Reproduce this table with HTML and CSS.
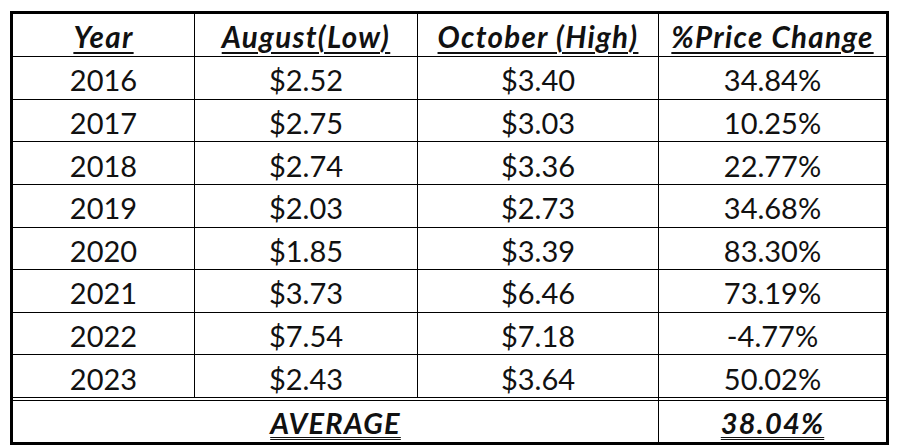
FILE: index.html
```html
<!DOCTYPE html>
<html lang="en">
<head>
<meta charset="utf-8">
<title>Price Change</title>
<link rel="stylesheet" href="styles.css">
</head>
<body>
<div class="sheet">
  <div class="grid">
    <div class="cell head"><span class="u">Year</span></div>
    <div class="cell head"><span class="u">August(Low)</span></div>
    <div class="cell head"><span class="u">October (High)</span></div>
    <div class="cell head"><span class="u">%Price Change</span></div>

    <div class="cell">2016</div><div class="cell">$2.52</div><div class="cell">$3.40</div><div class="cell">34.84%</div>
    <div class="cell">2017</div><div class="cell">$2.75</div><div class="cell">$3.03</div><div class="cell">10.25%</div>
    <div class="cell">2018</div><div class="cell">$2.74</div><div class="cell">$3.36</div><div class="cell">22.77%</div>
    <div class="cell">2019</div><div class="cell">$2.03</div><div class="cell">$2.73</div><div class="cell">34.68%</div>
    <div class="cell">2020</div><div class="cell">$1.85</div><div class="cell">$3.39</div><div class="cell">83.30%</div>
    <div class="cell">2021</div><div class="cell">$3.73</div><div class="cell">$6.46</div><div class="cell">73.19%</div>
    <div class="cell">2022</div><div class="cell">$7.54</div><div class="cell">$7.18</div><div class="cell">-4.77%</div>
    <div class="cell">2023</div><div class="cell">$2.43</div><div class="cell">$3.64</div><div class="cell">50.02%</div>

    <div class="cell avg span3"><span class="uu">AVERAGE</span></div>
    <div class="cell avg"><span class="uu">38.04%</span></div>
  </div>
</div>
</body>
</html>
```
FILE: styles.css
```css
html, body {
  margin: 0;
  padding: 0;
  background: #fff;
}
body {
  font-family: Lato, "Open Sans", sans-serif;
  color: #111;
}
.sheet {
  padding: 11px 0 0 10px;
}
.grid {
  display: grid;
  width: 873px;
  grid-template-columns: 181px 222px 240px 227px;
  grid-template-rows: 42px repeat(8, 41.625px) 44px;
  gap: 1px;
  background: #000;
  border: 3px solid #000;
}
.cell {
  background: #fff;
  display: flex;
  align-items: center;
  justify-content: center;
  font-size: 29px;
  padding-top: 4px;
  box-sizing: border-box;
  line-height: 1;
}
.head {
  font-weight: 700;
  font-style: italic;
  font-size: 29.5px;
  letter-spacing: 1.3px;
  padding-top: 3px;
}
.u {
  text-decoration: underline;
  text-decoration-thickness: 2px;
  text-underline-offset: 4px;
}
.avg {
  font-weight: 700;
  font-style: italic;
  letter-spacing: 1.2px;
  border-top: 2px solid #fff;
  box-shadow: inset 0 1px 0 #000;
  padding-top: 2px;
}
.span3 {
  grid-column: 1 / span 3;
}
.uu {
  text-decoration: underline double;
  text-decoration-thickness: 1px;
  text-underline-offset: 3px;
}
```
